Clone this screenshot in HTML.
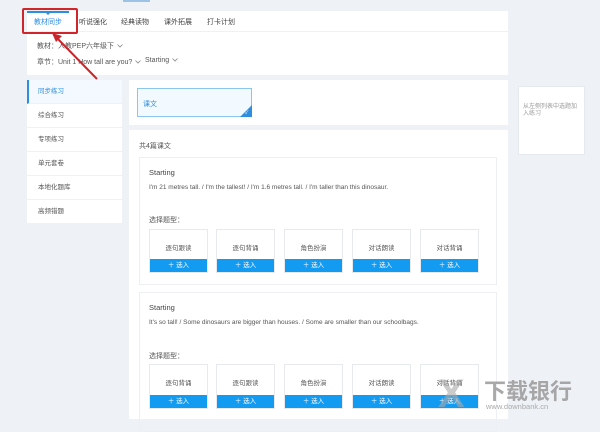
<!DOCTYPE html>
<html><head><meta charset="utf-8"><style>
*{margin:0;padding:0;box-sizing:border-box}
body{width:600px;height:419px;overflow:hidden;background:#eef1f6;font-family:"Liberation Sans","Noto Sans CJK SC",sans-serif;color:#555;font-size:7px;position:relative}
.a{position:absolute}
.w{background:#fff}
.t{position:absolute;white-space:nowrap}
.box{position:absolute;width:59px;height:44px;border:1px solid #e6e9ee;background:#fff}
.box span{position:absolute;left:0;right:0;top:12px;text-align:center;font-size:6.5px;color:#555}
.box b{position:absolute;left:0;right:0;bottom:0;height:13px;background:#139bf2;color:#fff;font-weight:normal;text-align:center;line-height:13px;font-size:6.5px}
.m{position:absolute;left:27px;width:95px;height:24px;border-bottom:1px solid #eef1f6;padding-left:11px;line-height:24px;font-size:6.5px;color:#555;background:#fff}
.cv{display:inline-block;vertical-align:middle;margin-left:3px}
</style></head><body>
<div class="a" style="left:123px;top:0;width:27px;height:2px;background:#9cc3e6"></div>
<div class="a w" style="left:27px;top:11px;width:481px;height:20px"></div>
<div class="a" style="left:27px;top:11px;width:42px;height:2px;background:#2d8ee0"></div>
<div class="a" style="left:46px;top:13px;width:0;height:0;border-left:2px solid transparent;border-right:2px solid transparent;border-top:2px solid #2d8ee0"></div>
<div class="t" style="left:34px;top:17px;color:#2d8ee0">教材同步</div>
<div class="t" style="left:79px;top:17px;color:#444">听说强化</div>
<div class="t" style="left:121px;top:17px;color:#444">经典读物</div>
<div class="t" style="left:164px;top:17px;color:#444">课外拓展</div>
<div class="t" style="left:207px;top:17px;color:#444">打卡计划</div>
<div class="a w" style="left:27px;top:32px;width:481px;height:43px"></div>
<div class="t" style="left:37px;top:41px;color:#555">教材：人教PEP六年级下<svg class="cv" width="6" height="4"><path d="M0.5 0.5 L3 3 L5.5 0.5" stroke="#888" fill="none" stroke-width="0.8"/></svg></div>
<div class="t" style="left:37px;top:57px;color:#555">章节：Unit 1 How tall are you?<svg class="cv" width="6" height="4"><path d="M0.5 0.5 L3 3 L5.5 0.5" stroke="#888" fill="none" stroke-width="0.8"/></svg></div>
<div class="t" style="left:145px;top:57px;color:#555">Starting<svg class="cv" width="6" height="4"><path d="M0.5 0.5 L3 3 L5.5 0.5" stroke="#888" fill="none" stroke-width="0.8"/></svg></div>
<div class="a" style="left:22px;top:8px;width:56px;height:26px;border:2px solid #d0262b;border-radius:2px"></div>
<svg class="a" style="left:0;top:0" width="600" height="100"><line x1="97" y1="79" x2="56" y2="37" stroke="#c8262b" stroke-width="2"/><path d="M52 33 L62 36 L56 42 Z" fill="#c8262b"/></svg>
<div class="m" style="top:80px;background:#f4f9ff;color:#2d8ee0;border-left:2px solid #2d8ee0;padding-left:9px">同步练习</div>
<div class="m" style="top:104px">综合练习</div>
<div class="m" style="top:128px">专项练习</div>
<div class="m" style="top:152px">单元套卷</div>
<div class="m" style="top:176px">本地化题库</div>
<div class="m" style="top:200px">高频错题</div>
<div class="a w" style="left:129px;top:80px;width:379px;height:45px"></div>
<div class="a" style="left:137px;top:88px;width:115px;height:29px;border:1px solid #8cc6ec;background:#f2faff"></div>
<div class="t" style="left:143px;top:99px;color:#2d8ee0">课文</div>
<div class="a" style="left:240px;top:105px;width:0;height:0;border-left:12px solid transparent;border-bottom:12px solid #2d8ee0"></div>
<div class="t" style="left:245px;top:109px;color:#fff;font-size:5px">✓</div>
<div class="a w" style="left:129px;top:130px;width:379px;height:289px"></div>
<div class="t" style="left:139px;top:141px;color:#555">共4篇课文</div>
<div class="a" style="left:139px;top:157px;width:358px;height:128px;border:1px solid #eceff3"></div>
<div class="t" style="left:149px;top:168px;font-size:7.5px;color:#444">Starting</div>
<div class="t" style="left:149px;top:184px;font-size:6.5px">I'm 21 metres tall. / I'm the tallest! / I'm 1.6 metres tall. / I'm taller than this dinosaur.</div>
<div class="t" style="left:149px;top:215px">选择题型：</div>
<div class="box" style="left:149px;top:229px"><span>逐句跟读</span><b>＋ 选入</b></div>
<div class="box" style="left:216px;top:229px"><span>逐句背诵</span><b>＋ 选入</b></div>
<div class="box" style="left:284px;top:229px"><span>角色扮演</span><b>＋ 选入</b></div>
<div class="box" style="left:352px;top:229px"><span>对话朗读</span><b>＋ 选入</b></div>
<div class="box" style="left:420px;top:229px"><span>对话背诵</span><b>＋ 选入</b></div>
<div class="a" style="left:139px;top:292px;width:358px;height:140px;border:1px solid #eceff3"></div>
<div class="t" style="left:149px;top:303px;font-size:7.5px;color:#444">Starting</div>
<div class="t" style="left:149px;top:319px;font-size:6.5px">It's so tall! / Some dinosaurs are bigger than houses. / Some are smaller than our schoolbags.</div>
<div class="t" style="left:149px;top:351px">选择题型：</div>
<div class="box" style="left:149px;top:364px;height:45px"><span>逐句背诵</span><b>＋ 选入</b></div>
<div class="box" style="left:216px;top:364px;height:45px"><span>逐句跟读</span><b>＋ 选入</b></div>
<div class="box" style="left:284px;top:364px;height:45px"><span>角色扮演</span><b>＋ 选入</b></div>
<div class="box" style="left:352px;top:364px;height:45px"><span>对话朗读</span><b>＋ 选入</b></div>
<div class="box" style="left:420px;top:364px;height:45px"><span>对话背诵</span><b>＋ 选入</b></div>
<div class="a w" style="left:518px;top:86px;width:67px;height:69px;border:1px solid #e6e9ee"></div>
<div class="a" style="left:523px;top:104px;width:58px;font-size:6px;color:#999;line-height:7px">从左侧列表中选题加入练习</div>
<div class="t" style="left:484px;top:374px;font-size:22px;color:#9a9a9a;font-weight:bold;opacity:.85">下载银行</div>
<div class="t" style="left:486px;top:402px;font-size:7.5px;color:#aaa">www.downbank.cn</div>
<div class="t" style="left:438px;top:372px;font-size:40px;color:#aaa;opacity:.6;font-weight:bold">X</div>
</body></html>
